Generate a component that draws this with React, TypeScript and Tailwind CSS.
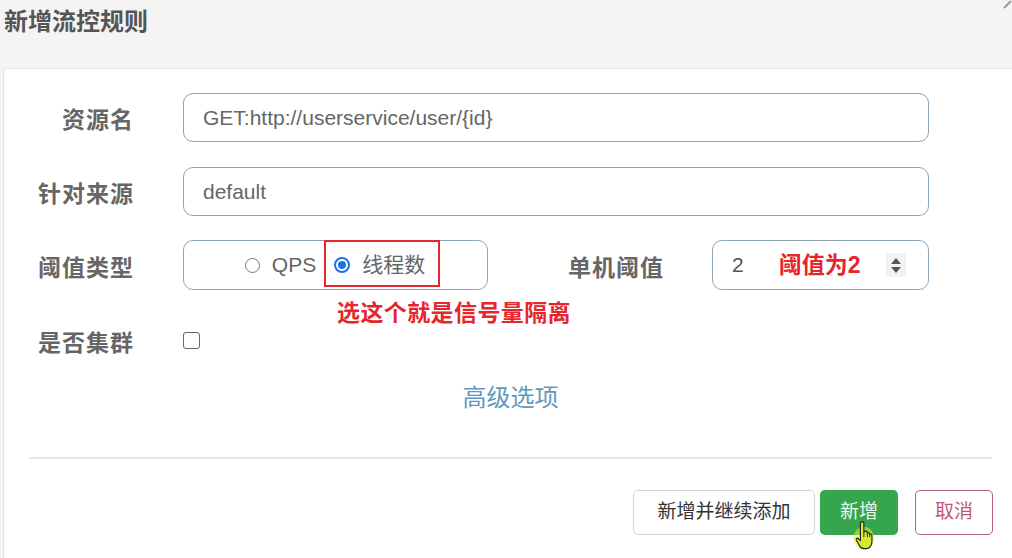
import React from "react";

const font = "font-['Liberation_Sans','Noto_Sans_CJK_SC',sans-serif]";

const Label = ({ text, className = "" }: { text: string; className?: string }) => (
  <div className={`pt-[6px] text-right text-[23px] font-bold tracking-[1px] text-[#666] ${className}`}>{text}</div>
);

const Radio = ({ checked }: { checked?: boolean }) =>
  checked ? (
    <span className="flex h-[16px] w-[16px] items-center justify-center rounded-full border-2 border-[#1a73e8] bg-white">
      <span className="h-[8px] w-[8px] rounded-full bg-[#1a73e8]" />
    </span>
  ) : (
    <span className="h-[15px] w-[15px] rounded-full border border-[#777] bg-white" />
  );

const HandCursor = () => (
  <svg width="24" height="30" viewBox="0 0 20 26" className="absolute left-[853px] top-[521px]">
    <ellipse cx="9" cy="15" rx="9" ry="10" fill="#e4ee3a" opacity="0.55" />
    <path
      d="M6 1.5C6 0.3 9 0.3 9 1.5L9 9.5L10 9C11 8.5 12 9 12 10L12 10.5C13 10 14 10.5 14 11.5C15 11 16 11.5 16 12.5L16 18C16 21 14 24 11 24L9 24C7 24 6 23 5 21L2.5 16.5C2 15.5 3 14.5 4 15L6 17Z"
      fill="#d9e82c"
      stroke="#222"
      strokeWidth="1"
      strokeLinejoin="round"
    />
    <path d="M9 9.5L9 14M12 10.5L12 14M14 11.5L14 14" stroke="#222" strokeWidth="0.8" />
  </svg>
);

export default function App() {
  return (
    <div className={`relative h-[558px] w-[1012px] overflow-hidden bg-[#f4f4f4] ${font}`}>
      {/* header */}
      <div className="h-[68px] pl-[4px] pt-[4px] text-[24px] font-bold text-[#555]">新增流控规则</div>
      <svg width="10" height="10" className="absolute right-0 top-0">
        <path d="M2 8L9 1" stroke="#999" strokeWidth="2" />
      </svg>

      {/* card */}
      <div className="ml-[3px] h-[500px] w-[1014px] rounded-tl-[4px] border-l border-t border-[#e4e4e4] bg-white pt-[24px]">
        <div className="flex h-[49px] items-center">
          <Label text="资源名" className="w-[130px]" />
          <div className="ml-[49px] flex h-[49px] w-[746px] items-center rounded-[10px] border border-[#8ea3b3] px-[19px] text-[21px] text-[#666]">
            GET:http://userservice/user/{"{id}"}
          </div>
        </div>

        <div className="mt-[25px] flex h-[49px] items-center">
          <Label text="针对来源" className="w-[130px]" />
          <div className="ml-[49px] flex h-[49px] w-[746px] items-center rounded-[10px] border border-[#8ea3b3] px-[19px] text-[21px] text-[#666]">
            default
          </div>
        </div>

        <div className="mt-[24px] flex h-[50px] items-center">
          <Label text="阈值类型" className="w-[130px]" />
          <div className="relative ml-[49px] flex h-[50px] w-[305px] items-center justify-center rounded-[10px] border border-[#8ea3b3] text-[21px] text-[#666]">
            <div className="flex items-center pr-[1px]">
              <Radio />
              <span className="ml-[12px]">QPS</span>
              <span className="ml-[18px]">
                <Radio checked />
              </span>
              <span className="ml-[12px]">线程数</span>
            </div>
            <div className="absolute left-[140px] top-[-1px] h-[47px] w-[116px] border-2 border-[#e5262b]" />
          </div>
          <Label text="单机阈值" className="w-[176px]" />
          <div className="ml-[48px] flex h-[50px] w-[217px] items-center rounded-[10px] border border-[#8ea3b3] pl-[19px] pr-[22px] text-[21px] text-[#555]">
            <span>2</span>
            <span className="ml-[35px] text-[23px] font-bold text-[#e5262b]">阈值为2</span>
            <span className="ml-auto flex h-[24px] w-[20px] flex-col items-center justify-center gap-[3px] bg-[#f2f2f2]">
              <span className="h-0 w-0 border-x-[5px] border-b-[6px] border-x-transparent border-b-[#555]" />
              <span className="h-0 w-0 border-x-[5px] border-t-[6px] border-x-transparent border-t-[#555]" />
            </span>
          </div>
        </div>

        <div className="ml-[333px] mt-[8px] h-[30px] text-[23px] font-bold leading-[30px] tracking-[0.4px] text-[#e5262b]">选这个就是信号量隔离</div>

        <div className="flex h-[24px] items-center">
          <Label text="是否集群" className="w-[130px]" />
          <span className="ml-[49px] h-[17px] w-[17px] rounded-[3px] border-[1.5px] border-[#666] bg-white" />
        </div>

        <div className="mt-[31px] text-center text-[24px] leading-[30px] text-[#5f98c0]">高级选项</div>

        <div className="mx-[25px] mt-[44px] h-[2px] bg-[#e6e6e6]" />

        <div className="mt-[31px] flex justify-end pr-[24px] text-[19px]">
          <button className="h-[45px] w-[182px] rounded-[5px] border border-[#d4d4d4] bg-white text-[#333]">新增并继续添加</button>
          <button className="ml-[5px] h-[45px] w-[78px] rounded-[5px] bg-[#35a64c] text-[#eef8ee]">新增</button>
          <button className="ml-[17px] h-[45px] w-[78px] rounded-[5px] border border-[#b5607a] bg-white text-[#c2567a]">取消</button>
        </div>
      </div>

      <HandCursor />
    </div>
  );
}
